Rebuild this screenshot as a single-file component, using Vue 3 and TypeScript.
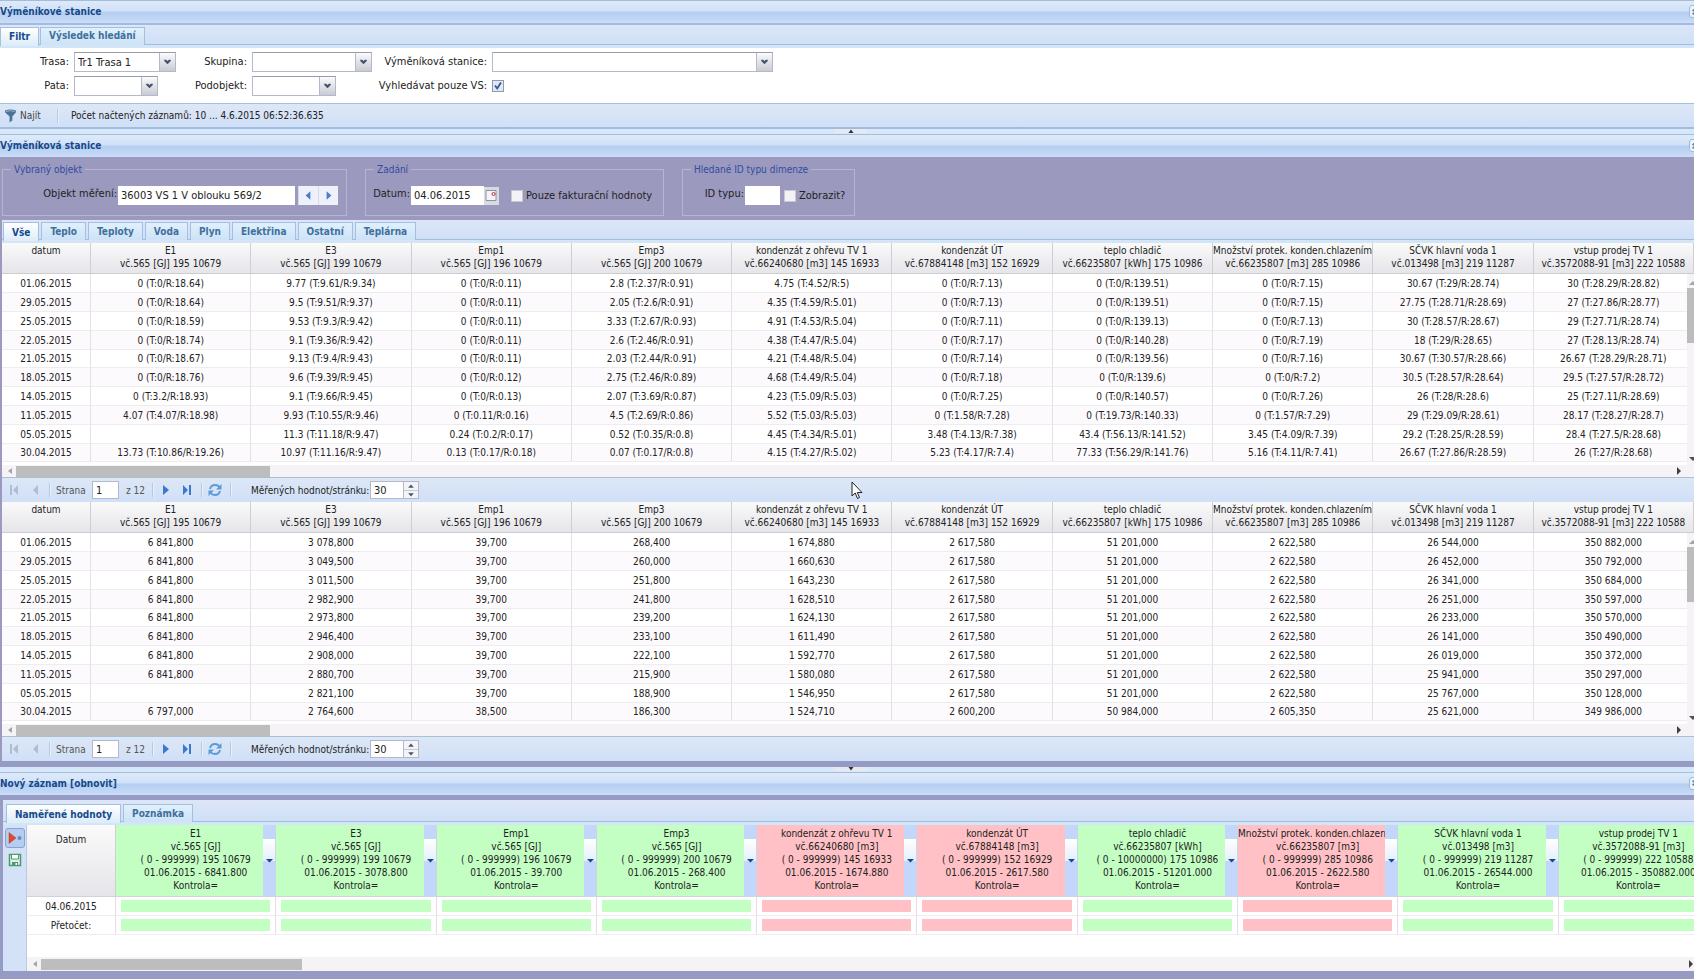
<script setup lang="ts">
import { ref } from 'vue'

interface Meter {
  name: string
  serial: string
  unit: string
  code: string
  range: string
  last: string
  warn: boolean
}

const meters: Meter[] = [
  { name: 'E1', serial: 'vč.565', unit: '[GJ]', code: '195 10679', range: '( 0 - 999999)', last: '6841.800', warn: false },
  { name: 'E3', serial: 'vč.565', unit: '[GJ]', code: '199 10679', range: '( 0 - 999999)', last: '3078.800', warn: false },
  { name: 'Emp1', serial: 'vč.565', unit: '[GJ]', code: '196 10679', range: '( 0 - 999999)', last: '39.700', warn: false },
  { name: 'Emp3', serial: 'vč.565', unit: '[GJ]', code: '200 10679', range: '( 0 - 999999)', last: '268.400', warn: false },
  { name: 'kondenzát z ohřevu TV 1', serial: 'vč.66240680', unit: '[m3]', code: '145 16933', range: '( 0 - 999999)', last: '1674.880', warn: true },
  { name: 'kondenzát ÚT', serial: 'vč.67884148', unit: '[m3]', code: '152 16929', range: '( 0 - 999999)', last: '2617.580', warn: true },
  { name: 'teplo chladič', serial: 'vč.66235807', unit: '[kWh]', code: '175 10986', range: '( 0 - 10000000)', last: '51201.000', warn: false },
  { name: 'Množství protek. konden.chlazením 1', serial: 'vč.66235807', unit: '[m3]', code: '285 10986', range: '( 0 - 999999)', last: '2622.580', warn: true },
  { name: 'SČVK hlavní voda 1', serial: 'vč.013498', unit: '[m3]', code: '219 11287', range: '( 0 - 999999)', last: '26544.000', warn: false },
  { name: 'vstup prodej TV 1', serial: 'vč.3572088-91', unit: '[m3]', code: '222 10588', range: '( 0 - 999999)', last: '350882.000', warn: false },
]

const days = ['01.06.2015', '29.05.2015', '25.05.2015', '22.05.2015', '21.05.2015', '18.05.2015', '14.05.2015', '11.05.2015', '05.05.2015', '30.04.2015']

const averages = [
  ['0 (T:0/R:18.64)', '9.77 (T:9.61/R:9.34)', '0 (T:0/R:0.11)', '2.8 (T:2.37/R:0.91)', '4.75 (T:4.52/R:5)', '0 (T:0/R:7.13)', '0 (T:0/R:139.51)', '0 (T:0/R:7.15)', '30.67 (T:29/R:28.74)', '30 (T:28.29/R:28.82)'],
  ['0 (T:0/R:18.64)', '9.5 (T:9.51/R:9.37)', '0 (T:0/R:0.11)', '2.05 (T:2.6/R:0.91)', '4.35 (T:4.59/R:5.01)', '0 (T:0/R:7.13)', '0 (T:0/R:139.51)', '0 (T:0/R:7.15)', '27.75 (T:28.71/R:28.69)', '27 (T:27.86/R:28.77)'],
  ['0 (T:0/R:18.59)', '9.53 (T:9.3/R:9.42)', '0 (T:0/R:0.11)', '3.33 (T:2.67/R:0.93)', '4.91 (T:4.53/R:5.04)', '0 (T:0/R:7.11)', '0 (T:0/R:139.13)', '0 (T:0/R:7.13)', '30 (T:28.57/R:28.67)', '29 (T:27.71/R:28.74)'],
  ['0 (T:0/R:18.74)', '9.1 (T:9.36/R:9.42)', '0 (T:0/R:0.11)', '2.6 (T:2.46/R:0.91)', '4.38 (T:4.47/R:5.04)', '0 (T:0/R:7.17)', '0 (T:0/R:140.28)', '0 (T:0/R:7.19)', '18 (T:29/R:28.65)', '27 (T:28.13/R:28.74)'],
  ['0 (T:0/R:18.67)', '9.13 (T:9.4/R:9.43)', '0 (T:0/R:0.11)', '2.03 (T:2.44/R:0.91)', '4.21 (T:4.48/R:5.04)', '0 (T:0/R:7.14)', '0 (T:0/R:139.56)', '0 (T:0/R:7.16)', '30.67 (T:30.57/R:28.66)', '26.67 (T:28.29/R:28.71)'],
  ['0 (T:0/R:18.76)', '9.6 (T:9.39/R:9.45)', '0 (T:0/R:0.12)', '2.75 (T:2.46/R:0.89)', '4.68 (T:4.49/R:5.04)', '0 (T:0/R:7.18)', '0 (T:0/R:139.6)', '0 (T:0/R:7.2)', '30.5 (T:28.57/R:28.64)', '29.5 (T:27.57/R:28.72)'],
  ['0 (T:3.2/R:18.93)', '9.1 (T:9.66/R:9.45)', '0 (T:0/R:0.13)', '2.07 (T:3.69/R:0.87)', '4.23 (T:5.09/R:5.03)', '0 (T:0/R:7.25)', '0 (T:0/R:140.57)', '0 (T:0/R:7.26)', '26 (T:28/R:28.6)', '25 (T:27.11/R:28.69)'],
  ['4.07 (T:4.07/R:18.98)', '9.93 (T:10.55/R:9.46)', '0 (T:0.11/R:0.16)', '4.5 (T:2.69/R:0.86)', '5.52 (T:5.03/R:5.03)', '0 (T:1.58/R:7.28)', '0 (T:19.73/R:140.33)', '0 (T:1.57/R:7.29)', '29 (T:29.09/R:28.61)', '28.17 (T:28.27/R:28.7)'],
  ['', '11.3 (T:11.18/R:9.47)', '0.24 (T:0.2/R:0.17)', '0.52 (T:0.35/R:0.8)', '4.45 (T:4.34/R:5.01)', '3.48 (T:4.13/R:7.38)', '43.4 (T:56.13/R:141.52)', '3.45 (T:4.09/R:7.39)', '29.2 (T:28.25/R:28.59)', '28.4 (T:27.5/R:28.68)'],
  ['13.73 (T:10.86/R:19.26)', '10.97 (T:11.16/R:9.47)', '0.13 (T:0.17/R:0.18)', '0.07 (T:0.17/R:0.8)', '4.15 (T:4.27/R:5.02)', '5.23 (T:4.17/R:7.4)', '77.33 (T:56.29/R:141.76)', '5.16 (T:4.11/R:7.41)', '26.67 (T:27.86/R:28.59)', '26 (T:27/R:28.68)'],
]

const readings = [
  ['6 841,800', '3 078,800', '39,700', '268,400', '1 674,880', '2 617,580', '51 201,000', '2 622,580', '26 544,000', '350 882,000'],
  ['6 841,800', '3 049,500', '39,700', '260,000', '1 660,630', '2 617,580', '51 201,000', '2 622,580', '26 452,000', '350 792,000'],
  ['6 841,800', '3 011,500', '39,700', '251,800', '1 643,230', '2 617,580', '51 201,000', '2 622,580', '26 341,000', '350 684,000'],
  ['6 841,800', '2 982,900', '39,700', '241,800', '1 628,510', '2 617,580', '51 201,000', '2 622,580', '26 251,000', '350 597,000'],
  ['6 841,800', '2 973,800', '39,700', '239,200', '1 624,130', '2 617,580', '51 201,000', '2 622,580', '26 233,000', '350 570,000'],
  ['6 841,800', '2 946,400', '39,700', '233,100', '1 611,490', '2 617,580', '51 201,000', '2 622,580', '26 141,000', '350 490,000'],
  ['6 841,800', '2 908,000', '39,700', '222,100', '1 592,770', '2 617,580', '51 201,000', '2 622,580', '26 019,000', '350 372,000'],
  ['6 841,800', '2 880,700', '39,700', '215,900', '1 580,080', '2 617,580', '51 201,000', '2 622,580', '25 941,000', '350 297,000'],
  ['', '2 821,100', '39,700', '188,900', '1 546,950', '2 617,580', '51 201,000', '2 622,580', '25 767,000', '350 128,000'],
  ['6 797,000', '2 764,600', '38,500', '186,300', '1 524,710', '2 600,200', '50 984,000', '2 605,350', '25 621,000', '349 986,000'],
]

const grids = [
  { id: 'avg', rows: averages },
  { id: 'val', rows: readings },
]

const mediaTabs = ['Vše', 'Teplo', 'Teploty', 'Voda', 'Plyn', 'Elektřina', 'Ostatní', 'Teplárna']
const activeMedia = ref('Vše')
const filterTab = ref('Filtr')
const entryTab = ref('Naměřené hodnoty')
const onlyStations = ref(true)
const meterObject = ref('36003 VS 1 V oblouku 569/2')
const entryDate = ref('04.06.2015')
const page = ref('1')
const pageSize = ref('30')
</script>

<template>
  <main class="app">
    <section>
      <header class="head">
        <h2>Výměníkové stanice</h2>
        <button class="tool" aria-label="Sbalit"><svg viewBox="0 0 13 13"><path d="M3 6l3.500-3 3.500 3M3 10l3.500-3 3.500 3" /></svg></button>
      </header>
      <nav class="tabs tabs-top">
        <button v-for="t in ['Filtr', 'Výsledek hledání']" :key="t" class="tab" :class="{ on: t === filterTab }" @click="filterTab = t">{{ t }}</button>
      </nav>
      <form class="filter" @submit.prevent>
        <label for="trasa">Trasa:</label>
        <span class="combo"><select id="trasa"><option>Tr1 Trasa 1</option></select><svg viewBox="0 0 16 18"><path d="M4.500 6.500h2l1.500 1.500 1.500-1.500h2v1.500l-3.500 3.500-3.500-3.500z" /></svg></span>
        <label for="skupina">Skupina:</label>
        <span class="combo"><select id="skupina"><option></option></select><svg viewBox="0 0 16 18"><path d="M4.500 6.500h2l1.500 1.500 1.500-1.500h2v1.500l-3.500 3.500-3.500-3.500z" /></svg></span>
        <label for="stanice">Výměníková stanice:</label>
        <span class="combo"><select id="stanice"><option></option></select><svg viewBox="0 0 16 18"><path d="M4.500 6.500h2l1.500 1.500 1.500-1.500h2v1.500l-3.500 3.500-3.500-3.500z" /></svg></span>
        <label for="pata">Pata:</label>
        <span class="combo w-s"><select id="pata"><option></option></select><svg viewBox="0 0 16 18"><path d="M4.500 6.500h2l1.500 1.500 1.500-1.500h2v1.500l-3.500 3.500-3.500-3.500z" /></svg></span>
        <label for="podobjekt">Podobjekt:</label>
        <span class="combo w-s"><select id="podobjekt"><option></option></select><svg viewBox="0 0 16 18"><path d="M4.500 6.500h2l1.500 1.500 1.500-1.500h2v1.500l-3.500 3.500-3.500-3.500z" /></svg></span>
        <label for="pouzevs">Vyhledávat pouze VS:</label>
        <input id="pouzevs" v-model="onlyStations" type="checkbox" class="check">
      </form>
      <div class="bar find">
        <button class="find-btn">
          <svg viewBox="0 0 12 14"><path d="M0 1q6-2 12 0v2L8 7.500V12l-3 2V7.500L0 3z" fill="#4d7398" /><path d="M1 2q5-1.500 10 0" stroke="#9dbbd6" fill="none" /></svg>Najít
        </button>
        <i class="sep"></i>
        <span>Počet načtených záznamů: 10 ... 4.6.2015 06:52:36.635</span>
      </div>
    </section>

    <div class="split"><button aria-label="Sbalit horní panel"><svg viewBox="0 0 22 4"><path d="M8.500 4l2.500-3.500L13.500 4z" /></svg></button></div>

    <section>
      <header class="head">
        <h2>Výměníková stanice</h2>
        <button class="tool" aria-label="Sbalit"><svg viewBox="0 0 13 13"><path d="M3 6l3.500-3 3.500 3M3 10l3.500-3 3.500 3" /></svg></button>
      </header>
      <form class="params" @submit.prevent>
        <fieldset class="f-object">
          <legend>Vybraný objekt</legend>
          <div class="line">
            <label for="objekt">Objekt měření:</label>
            <input id="objekt" v-model="meterObject" type="text" class="text object">
            <button class="step first" aria-label="Předchozí"><svg viewBox="0 0 20 19"><path d="M12 5v9L7 9.500z" /></svg></button>
            <button class="step" aria-label="Další"><svg viewBox="0 0 20 19"><path d="M8 5v9l5-4.500z" /></svg></button>
          </div>
        </fieldset>
        <fieldset class="f-entry">
          <legend>Zadání</legend>
          <div class="line">
            <label for="datum">Datum:</label>
            <input id="datum" v-model="entryDate" type="text" class="text date">
            <button class="cal" aria-label="Kalendář"><svg viewBox="0 0 14 18"><path d="M2 3.500h10v10H2z" fill="#f4f4f6" stroke="#8e93a2" /><circle cx="9.500" cy="7" r="1.500" fill="#fff" stroke="#b02a3a" /></svg></button>
            <input id="faktur" type="checkbox" class="check bare">
            <label for="faktur">Pouze fakturační hodnoty</label>
          </div>
        </fieldset>
        <fieldset class="f-type">
          <legend>Hledané ID typu dimenze</legend>
          <div class="line">
            <label for="idtypu">ID typu:</label>
            <input id="idtypu" type="text" class="text short">
            <input id="zobrazit" type="checkbox" class="check bare">
            <label for="zobrazit">Zobrazit?</label>
          </div>
        </fieldset>
      </form>

      <div class="framed">
        <nav class="tabs tabs-media">
          <button v-for="t in mediaTabs" :key="t" class="tab" :class="{ on: t === activeMedia }" @click="activeMedia = t">{{ t }}</button>
        </nav>
        <template v-for="g in grids" :key="g.id">
          <div class="grid-wrap">
            <table class="grid">
              <colgroup><col class="c-date"><col v-for="m in meters" :key="m.code"></colgroup>
              <thead>
                <tr>
                  <th>datum</th>
                  <th v-for="m in meters" :key="m.code">{{ m.name }}<br>{{ m.serial }} {{ m.unit }} {{ m.code }}</th>
                </tr>
              </thead>
              <tbody>
                <tr v-for="(r, i) in g.rows" :key="days[i]">
                  <td>{{ days[i] }}</td>
                  <td v-for="(v, j) in r" :key="j">{{ v }}</td>
                </tr>
              </tbody>
            </table>
            <div class="vscroll">
              <svg viewBox="0 0 12 6"><path d="M2 5l4-4 4 4z" fill="#a5a5a5" /></svg>
              <i></i>
              <svg class="end" viewBox="0 0 12 6"><path d="M2 1l4 4 4-4z" fill="#505050" /></svg>
            </div>
          </div>
          <div class="hscroll">
            <svg viewBox="0 0 6 10"><path d="M5 2v6L1 5z" fill="#a5a5a5" /></svg><i></i>
            <svg class="end" viewBox="0 0 6 10"><path d="M1 1v8l4-4z" fill="#404040" /></svg>
          </div>
          <div class="bar pager">
            <button disabled aria-label="První"><svg viewBox="0 0 12 12"><path d="M2 1h2v10H2zM10 1v10L5 6z" /></svg></button>
            <button disabled aria-label="Zpět"><svg viewBox="0 0 12 12"><path d="M9 1v10L4 6z" /></svg></button>
            <i class="sep"></i>
            <label :for="g.id + '-page'" class="dim strana">Strana</label>
            <input :id="g.id + '-page'" v-model="page" type="text" class="text pg">
            <span class="dim of">z 12</span>
            <i class="sep"></i>
            <button aria-label="Vpřed"><svg viewBox="0 0 12 12"><path d="M3 1v10l6-5z" /></svg></button>
            <button aria-label="Poslední"><svg viewBox="0 0 12 12"><path d="M2 1v10l5-5zM8 1h2v10H8z" /></svg></button>
            <i class="sep"></i>
            <button aria-label="Obnovit" class="reload"><svg viewBox="0 0 14 14"><path d="M2 6q1-4 5-4 3 0 4.500 2M12 8q-1 4-5 4-3 0-4.500-2" fill="none" stroke="#5b9bd8" stroke-width="2" /><path d="M13.500 1v5.500H8zM.5 13V7.500H6z" fill="#5b9bd8" /></svg></button>
            <i class="sep"></i>
            <label :for="g.id + '-size'" class="per">Měřených hodnot/stránku:</label>
            <input :id="g.id + '-size'" v-model="pageSize" type="text" class="text size">
            <span class="spin">
              <button aria-label="Více"><svg viewBox="0 0 15 8"><path d="M4.500 6l3-3.500 3 3.500z" /></svg></button>
              <button aria-label="Méně"><svg viewBox="0 0 15 8"><path d="M4.500 2l3 3.500 3-3.500z" /></svg></button>
            </span>
          </div>
        </template>
      </div>
      <div class="rail"></div>
    </section>

    <div class="split"><button aria-label="Sbalit dolní panel"><svg viewBox="0 0 22 4"><path d="M8.500 0L11 3.500 13.500 0z" /></svg></button></div>

    <section class="entry">
      <header class="head">
        <h2>Nový záznam [obnovit]</h2>
        <button class="tool" aria-label="Rozbalit"><svg viewBox="0 0 13 13"><path d="M3 3l3.500 3 3.500-3M3 7l3.500 3 3.500-3" /></svg></button>
      </header>
      <div class="entry-body">
        <nav class="tabs tabs-entry">
          <button v-for="t in ['Naměřené hodnoty', 'Poznámka']" :key="t" class="tab" :class="{ on: t === entryTab }" @click="entryTab = t">{{ t }}</button>
        </nav>
        <div class="entry-main">
          <div class="side">
            <button class="pressed" aria-label="Vložit"><svg viewBox="0 0 16 16"><path d="M2 2.500v11L9 8z" fill="#dd4a2e" stroke="#b3452f" stroke-width=".5" /><circle cx="12.500" cy="8" r="2" fill="#5c8ed0" /></svg></button>
            <button aria-label="Uložit"><svg viewBox="0 0 16 16"><path d="M2.500 2.500h11v11h-11z" fill="#dff0e6" stroke="#4a9a72" stroke-width="1.500" /><path d="M4.500 2.500h7V7h-7z" fill="#fff" stroke="#4a9a72" /><path d="M5 10h6v3.500H5z" fill="#4a9a72" /><path d="M8.500 11h1.500v2H8.500z" fill="#fff" /></svg></button>
          </div>
          <div class="sheet">
            <div class="clip">
              <table class="form-grid">
                <colgroup><col class="c-date"><col v-for="m in meters" :key="m.code"></colgroup>
                <thead>
                  <tr>
                    <th class="d">Datum</th>
                    <th v-for="m in meters" :key="m.code">
                      <div class="mh" :class="{ warn: m.warn }">
                        <div class="mt"><div class="mi">{{ m.name }}<br>{{ m.serial }} {{ m.unit }}<br>{{ m.range }} {{ m.code }}<br>01.06.2015 - {{ m.last }}<br>Kontrola=</div></div>
                        <button class="menu" :aria-label="'Nabídka ' + m.name"><svg viewBox="0 0 12 6"><path d="M3 1h7L6.500 4.500z" /></svg></button>
                      </div>
                    </th>
                  </tr>
                </thead>
                <tbody>
                  <tr v-for="row in ['04.06.2015', 'Přetočet:']" :key="row">
                    <td>{{ row }}</td>
                    <td v-for="m in meters" :key="m.code"><input type="text" class="cell" :class="{ warn: m.warn }" :aria-label="m.name + ' ' + row"></td>
                  </tr>
                </tbody>
              </table>
            </div>
            <div class="hscroll low">
              <svg viewBox="0 0 6 10"><path d="M5 2v6L1 5z" fill="#a5a5a5" /></svg><i></i>
              <svg class="end" viewBox="0 0 6 10"><path d="M1 1v8l4-4z" fill="#404040" /></svg>
            </div>
          </div>
        </div>
      </div>
    </section>
    <svg class="pointer" viewBox="0 0 12 19"><path d="M1 1v14l3.200-3 2.300 5.500 2-1L6.300 11.500H11z" fill="#fff" stroke="#222" /></svg>
  </main>
</template>

<style>
html, body { margin: 0; height: 100%; overflow: hidden; }
#app { height: 100%; }
</style>

<style scoped>
.app { position: relative; display: flex; flex-direction: column; min-height: 100%; overflow: hidden; background: #fff; color: #222; font: 10px/13px "DejaVu Sans Condensed", "DejaVu Sans", sans-serif; }
.app, .app * { box-sizing: border-box; }
button, input, select { font: inherit; color: inherit; margin: 0; padding: 0; border: 0; border-radius: 0; background: none; }
button { display: block; }
svg { display: block; }

.head { display: flex; align-items: center; height: 23px; padding-bottom: 2px; overflow: hidden; border-top: 1px solid #a3bdd6; background: linear-gradient(#dfeafa 0, #d0e1f7 10px, #b4cdf0 11px, #cadcf8 22px); }
.app > section:first-child .head { height: 25px; border-bottom: 2px solid #a2bce0; }
.head h2 { margin: 0; flex: 1; font-size: 10px; font-weight: bold; color: #15498b; }
.tool { width: 13px; height: 13px; margin-right: -8px; flex: none; border: 1px solid #9dbcd8; border-radius: 3px; background: #e9f4fd; }
.tool svg { width: 11px; height: 11px; fill: none; stroke: #5f84ab; stroke-width: 2; }

.tabs { display: flex; align-items: flex-end; gap: 2px; background: linear-gradient(#dde6f8, #cfdff6); border-bottom: 3px solid #d3e6f8; box-shadow: inset 0 -1px #9fbfdf; }
.tab { height: 18px; padding: 0 8px; border: 1px solid #a3c0e0; border-bottom: 0; background: linear-gradient(#e0f1fc, #cde2f7); color: #416f9c; font-weight: bold; font-size: 10px; white-space: nowrap; }
.tab.on { height: 19px; margin-bottom: -1px; background: linear-gradient(#fff, #dcecfa); color: #15498b; }
.tabs-top { height: 23px; gap: 1px; }
.tabs-top .tab { padding-bottom: 2px; }
.tabs-media { height: 23px; padding-left: 1px; }
.tabs-entry { height: 25px; padding-left: 3px; }

.filter { display: grid; grid-template-columns: 69px 102px 66px 120px 110px 281px; column-gap: 5px; row-gap: 4px; height: 55px; padding-top: 4px; align-content: start; align-items: center; font-size: 11px; }
.filter label { text-align: right; white-space: nowrap; padding-bottom: 1px; }
.combo { position: relative; display: block; width: 100%; height: 20px; border: 1px solid #b5b8c8; border-top-color: #9a9cab; }
.combo.w-s { width: 84px; }
.combo select { width: 100%; height: 18px; appearance: none; padding-left: 3px; background: #fff; }
.combo svg { position: absolute; right: 0; top: 0; width: 16px; height: 18px; pointer-events: none; background: linear-gradient(#fbfbfc, #c9cbd4); border-left: 1px solid #b5b8c8; fill: #44546e; }
.check { appearance: none; width: 12px; height: 12px; border: 1px solid #8c9ab0; background: #e8edf4; }
.check:checked { background: #dfe8f3 url("data:image/svg+xml,%3Csvg xmlns='http://www.w3.org/2000/svg' viewBox='0 0 10 10'%3E%3Cpath d='M2 4.500l2.200 3L8 1.500' fill='none' stroke='%23345a94' stroke-width='1.800'/%3E%3C/svg%3E") center / 10px no-repeat; }
.check.bare { border-color: #c9c8d6; background: #f3f2f5; flex: none; }

.bar { display: flex; align-items: center; background: linear-gradient(#dce8f7, #d6e2f6 60%, #cfe0f8); border-top: 1px solid #a9bfd3; white-space: nowrap; }
.sep { width: 1px; height: 14px; background: #b4c9e2; border-right: 1px solid #e8f1fb; box-sizing: content-box; flex: none; }
.find { height: 26px; padding-left: 5px; border-bottom: 2px solid #a2bce0; }
.find-btn { display: flex; align-items: center; gap: 4px; width: 52px; color: #444; }
.find-btn svg { width: 11px; height: 14px; }
.find > span { margin-left: 12px; }

.split { display: flex; justify-content: center; height: 5px; padding-left: 8px; background: #d6e8f9; }
.split button { width: 32px; height: 4px; background: #e6e9f0; }
.split svg { width: 22px; height: 4px; margin: 0 auto; fill: #333; }

.params { display: flex; gap: 18px; height: 63px; padding: 6px 2px 0; background: #9c99be; font-size: 11px; }
fieldset { margin: 0; padding: 0; min-width: 0; height: 53px; border: 1px solid #b6b5d4; }
legend { margin-left: 8px; padding: 0 3px; font-size: 10px; line-height: 13px; color: #2f4da0; white-space: nowrap; }
.line { display: flex; align-items: center; margin-top: 10px; white-space: nowrap; }
.f-object { width: 345px; }
.f-entry { width: 299px; }
.f-type { width: 173px; }
.line label:first-child { text-align: right; padding-right: 1px; padding-bottom: 4px; }
.f-object label:first-child { width: 115px; }
.f-entry label:first-child { width: 45px; }
.f-type label:first-child { width: 62px; }
.text { height: 19px; padding: 0 3px; background: #fff; min-width: 0; }
.object { width: 177px; }
.date { width: 73px; }
.short { width: 35px; margin-right: 4px; }
.check + label { margin-left: 3px; }
.step { width: 20px; height: 19px; background: #eef1f9; border-left: 1px solid #d5d9e8; }
.step.first { margin-left: 3px; }
.step svg { width: 19px; height: 19px; fill: #4a7cc9; }
.cal { width: 15px; height: 18px; margin-right: 12px; background: #d9dae2; }
.cal svg { width: 14px; height: 18px; }

.framed { border-left: 2px solid #9c99be; }
.grid-wrap { position: relative; padding-bottom: 3px; }
.grid, .form-grid { border-collapse: separate; border-spacing: 0; table-layout: fixed; width: 100%; text-align: center; }
.c-date { width: 89px; }
.grid th { height: 31px; padding: 1px 0 0; font-weight: normal; vertical-align: top; line-height: 13px; border-right: 1px solid #cfcfd3; border-bottom: 1px solid #cdcdd1; background: linear-gradient(#fafafa, #e5e5ea); overflow: hidden; white-space: nowrap; }
.grid td { height: 19px; padding: 0; border-right: 1px solid #e4e1e6; border-bottom: 1px solid #ededed; white-space: nowrap; overflow: hidden; }
.grid tr:nth-child(5n) td { height: 18px; }
.grid tr:nth-child(even) td { background: #fdfafd; }
.vscroll { position: absolute; right: -5px; top: 31px; bottom: 0; width: 12px; display: flex; flex-direction: column; align-items: center; padding: 6px 0 3px; background: #f5f3f6; }
.vscroll svg { width: 12px; height: 6px; }
.vscroll i { width: 12px; height: 55px; margin-top: 2px; background: #bcbcbc; }
.end { margin-left: auto; }
.vscroll .end { margin: auto 0 0; }
.hscroll { display: flex; align-items: center; height: 12px; padding: 0 12px 0 5px; background: #f5f3f6; }
.hscroll svg { width: 6px; height: 10px; }
.hscroll i { width: 254px; height: 11px; margin-left: 3px; background: #bdbdbd; }

.pager { height: 25px; }
.pager > button { width: 12px; height: 12px; margin-left: 6px; flex: none; }
.pager > button + button { margin-left: 9px; }
.pager > button + .sep { margin-left: 8px; }
.pager svg { width: 12px; height: 12px; fill: #3d78cf; }
.pager button:disabled svg { fill: #adbdd4; }
.dim { color: #555; }
.strana { margin-left: 5px; width: 36px; }
.pager .text { height: 18px; border: 1px solid #b5b8c8; font-size: 11px; padding: 0 3px; }
.pg { width: 27px; }
.of { margin-left: 7px; width: 26px; }
.pager .reload { width: 14px; height: 14px; margin-left: 5px; }
.pager .reload svg { width: 14px; height: 14px; }
.per { margin-left: 19px; width: 119px; }
.size { width: 34px; }
.spin { width: 15px; height: 18px; border: 1px solid #b5b8c8; border-left: 0; background: #f3f4f7; }
.spin button { width: 14px; height: 8px; }
.spin button + button { border-top: 1px solid #c5c8d4; }
.spin svg { width: 14px; height: 8px; fill: #44546e; }
.rail { height: 6px; background: #959bc3; }

.entry { flex: 1; display: flex; flex-direction: column; }
.entry .head { flex: none; }
.entry-body { flex: 1; display: flex; flex-direction: column; border: solid #959bc3; border-width: 5px 0 8px 3px; }
.entry-main { flex: 1; display: flex; min-width: 0; }
.side { flex: none; width: 24px; padding: 3px 2px; background: #d3e2f7; border-right: 1px solid #b8cce6; }
.side button { width: 20px; height: 20px; padding: 2px; }
.side button + button { margin-top: 2px; }
.side .pressed { border: 1px solid #86a3d3; border-radius: 3px; background: #b7cdf0; padding: 1px; }
.side svg { width: 16px; height: 16px; }
.sheet { flex: 1; min-width: 0; display: flex; flex-direction: column; }
.clip { overflow: hidden; }
.form-grid { width: calc(100% + 25px); }
.form-grid th { height: 72px; padding: 0; font-weight: normal; border-right: 1px solid #c9d6e8; border-bottom: 1px solid #cfd3dc; line-height: 13px; }
.form-grid .d { vertical-align: top; padding-top: 8px; background: linear-gradient(#fafafa, #e5e5ea); border-right-color: #cfcfd3; }
.mh { display: flex; height: 71px; background: #c2d7fb; }
.mt { flex: 1; min-width: 0; height: 71px; padding-top: 2px; overflow: hidden; white-space: nowrap; background: #c3ffc3; }
.mi { margin-right: -12px; }
.mh.warn .mt, .cell.warn { background: #ffc1c5; }
.menu { width: 12px; height: 44px; margin-top: 14px; background: linear-gradient(#fff, #e4effc 50%, #c2d7fb 51%); }
.menu svg { width: 12px; height: 6px; fill: #15498b; }
.form-grid td { height: 19px; padding: 0 5px; border-right: 1px solid #e6dce8; border-bottom: 1px solid #f0edf1; line-height: 13px; }
.cell { display: block; width: 100%; height: 12px; background: #c3ffc3; }
.low { margin-top: auto; height: 14px; padding-right: 0; }
.low i { width: 261px; margin-left: 3px; }
.pointer { position: absolute; left: 851px; top: 481px; width: 12px; height: 19px; }
</style>
